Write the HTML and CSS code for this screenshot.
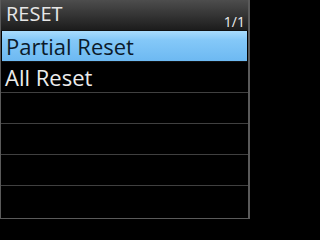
FILE: index.html
```html
<!DOCTYPE html>
<html>
<head>
<meta charset="utf-8">
<link rel="stylesheet" href="styles.css">
</head>
<body>
<div class="screen">
  <div class="header">
    <span class="title">RESET</span>
    <span class="page">1/1</span>
  </div>
  <div class="list">
    <div class="row selected">Partial Reset</div>
    <div class="row">All Reset</div>
    <div class="row"></div>
    <div class="row"></div>
    <div class="row"></div>
    <div class="row last"></div>
  </div>
</div>
</body>
</html>
```
FILE: styles.css
```css
html, body {
  margin: 0;
  padding: 0;
  background: #000;
}
.screen {
  width: 250px;
  height: 219px;
  box-sizing: border-box;
  border-left: 1px solid #5a5a5a;
  border-right: 2px solid #5a5a5a;
  border-bottom: 1px solid #5a5a5a;
  display: flex;
  flex-direction: column;
  font-family: "Open Sans", "DejaVu Sans", sans-serif;
  overflow: hidden;
}
.header {
  height: 30px;
  flex: none;
  background: linear-gradient(#4d4d4d, #1c1c1c);
  border-bottom: 1px solid #111;
  display: flex;
  justify-content: space-between;
  align-items: flex-start;
  padding: 0 3px 0 5px;
  color: #e6e6e6;
}
.title {
  font-size: 20px;
  line-height: 30px;
  margin-top: -1px;
}
.page {
  font-size: 14px;
  line-height: 14px;
  margin-top: 15px;
  color: #eeeeee;
}
.list {
  flex: 1;
  display: flex;
  flex-direction: column;
}
.row {
  height: 30px;
  flex: none;
  border-bottom: 1px solid #404040;
  padding-left: 4px;
  font-size: 22px;
  line-height: 30px;
  color: #ececec;
}
.row.last {
  flex: 1;
  border-bottom: none;
}
.row.selected {
  margin-left: 1px;
  margin-right: 1px;
  background: linear-gradient(#a9dcfc, #84c8f8 30%, #6db9f2);
  color: #0b1a2b;
  border-bottom: 1px solid #111;
}
```
